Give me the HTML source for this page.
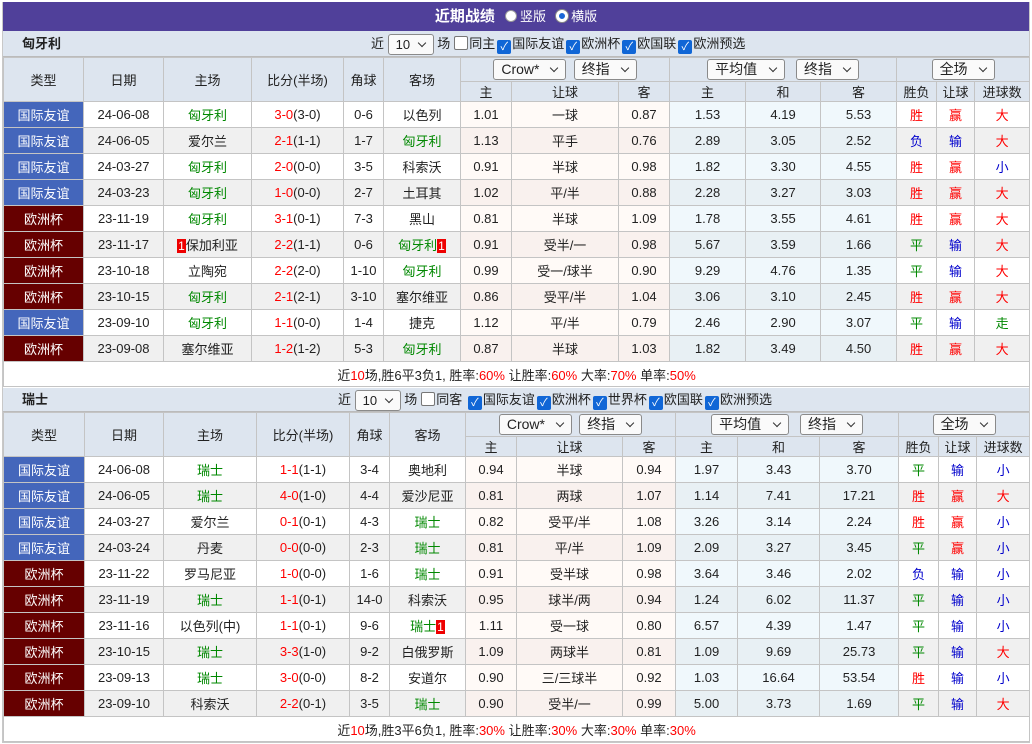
<!DOCTYPE html>
<html><head><meta charset="utf-8">
<style>
*{box-sizing:border-box}
body{margin:0;background:#fff;font-family:"Liberation Sans","Noto Sans CJK SC",sans-serif;font-size:13px;color:#222;width:1032px;height:744px;overflow:hidden}
.wrap{position:absolute;left:2px;top:2px;width:1028px;border:1px solid #c8c8c8;border-top:0}
.title{height:29px;background:#50409a;color:#fff;font-weight:bold;font-size:15px;text-align:center;line-height:29px}
.title .r{display:inline-block;width:12px;height:12px;border-radius:50%;background:#fff;border:1px solid #999;vertical-align:-1px;margin:0 3px 0 6px;font-weight:normal}
.title .r.on{border:3px solid #fff;background:#1a66d6;box-shadow:0 0 0 1px #888}
.title span.t{font-weight:normal;font-size:13px}
.team{height:26px;background:#dde5ef;position:relative;line-height:26px;border-bottom:1px solid #bbb}
.team b{position:absolute;left:19px;font-size:13px}
.team .f{position:absolute;top:0}
.sel{display:inline-block;border:1px solid #8a8a8a;border-radius:3px;background:#fafafa;height:21px;line-height:19px;padding:0 7px;vertical-align:middle;font-size:14px;text-align:left;position:relative;padding-right:26px}
.sel:after{content:"";position:absolute;right:8px;top:5px;width:5px;height:5px;border-right:1.5px solid #333;border-bottom:1.5px solid #333;transform:rotate(45deg)}
.cb{display:inline-block;width:14px;height:14px;border-radius:2px;background:#1066d6;color:#fff;font-size:11px;line-height:14px;text-align:center;vertical-align:-2px;margin:0 1px 0 2px}
.cb.off{background:#fff;border:1px solid #777;margin-left:4px}
table{border-collapse:collapse;width:100%;table-layout:fixed}
td,th{border:1px solid #c4c4c4;text-align:center;padding:0;font-weight:normal;white-space:nowrap;overflow:hidden}
th{background:#dde5ef}
tr.h1 th{height:24px}
tr.h2 th{height:18px}
tr.d td{height:26px}
tr.d:nth-child(even) td{background:#f0f0f0}
tr.d td.a{background:#fffaf7}
tr.d td.b{background:#f0f8fc}
tr.d:nth-child(even) td.a{background:#f9f1ee}
tr.d:nth-child(even) td.b{background:#e8f0f4}
td.i{background:#4466bb!important;color:#fff}
td.e{background:#660000!important;color:#fff}
.g{color:#008800}.rd{color:#f00}.bl{color:#00c}
.rc{background:#e00;color:#fff;font-size:12px;padding:0 1px}
td.sum{height:25px;background:#fff}
</style></head><body>
<div class="wrap">
<div class="title">近期战绩 <span class="r"></span><span class="t">竖版</span> <span class="r on"></span><span class="t">横版</span></div>

<div class="team"><b>匈牙利</b><div class="f" style="left:368px">近 <span class="sel" style="width:46px;font-size:13px">10</span> 场<span class="cb off"></span>同主<span class="cb">✓</span>国际友谊<span class="cb">✓</span>欧洲杯<span class="cb">✓</span>欧国联<span class="cb">✓</span>欧洲预选</div></div>
<table>
<colgroup><col style="width:80px"><col style="width:80px"><col style="width:88px"><col style="width:92px"><col style="width:40px"><col style="width:77px"><col style="width:51px"><col style="width:107px"><col style="width:51px"><col style="width:76px"><col style="width:75px"><col style="width:76px"><col style="width:40px"><col style="width:38px"><col style="width:55px"></colgroup>
<tr class="h1"><th rowspan="2">类型</th><th rowspan="2">日期</th><th rowspan="2">主场</th><th rowspan="2">比分(半场)</th><th rowspan="2">角球</th><th rowspan="2">客场</th><th colspan="3"><span class="sel">Crow*</span> &nbsp;<span class="sel">终指</span></th><th colspan="3"><span class="sel" style="width:78px">平均值</span> &nbsp; <span class="sel">终指</span></th><th colspan="3"><span class="sel">全场</span></th></tr>
<tr class="h2"><th>主</th><th>让球</th><th>客</th><th>主</th><th>和</th><th>客</th><th>胜负</th><th>让球</th><th>进球数</th></tr>
<tr class="d"><td class="i">国际友谊</td><td>24-06-08</td><td class="g">匈牙利</td><td><span class="rd">3-0</span>(3-0)</td><td>0-6</td><td>以色列</td><td class="a">1.01</td><td class="a">一球</td><td class="a">0.87</td><td class="b">1.53</td><td class="b">4.19</td><td class="b">5.53</td><td class="rd">胜</td><td class="rd">赢</td><td class="rd">大</td></tr>
<tr class="d"><td class="i">国际友谊</td><td>24-06-05</td><td>爱尔兰</td><td><span class="rd">2-1</span>(1-1)</td><td>1-7</td><td class="g">匈牙利</td><td class="a">1.13</td><td class="a">平手</td><td class="a">0.76</td><td class="b">2.89</td><td class="b">3.05</td><td class="b">2.52</td><td class="bl">负</td><td class="bl">输</td><td class="rd">大</td></tr>
<tr class="d"><td class="i">国际友谊</td><td>24-03-27</td><td class="g">匈牙利</td><td><span class="rd">2-0</span>(0-0)</td><td>3-5</td><td>科索沃</td><td class="a">0.91</td><td class="a">半球</td><td class="a">0.98</td><td class="b">1.82</td><td class="b">3.30</td><td class="b">4.55</td><td class="rd">胜</td><td class="rd">赢</td><td class="bl">小</td></tr>
<tr class="d"><td class="i">国际友谊</td><td>24-03-23</td><td class="g">匈牙利</td><td><span class="rd">1-0</span>(0-0)</td><td>2-7</td><td>土耳其</td><td class="a">1.02</td><td class="a">平/半</td><td class="a">0.88</td><td class="b">2.28</td><td class="b">3.27</td><td class="b">3.03</td><td class="rd">胜</td><td class="rd">赢</td><td class="rd">大</td></tr>
<tr class="d"><td class="e">欧洲杯</td><td>23-11-19</td><td class="g">匈牙利</td><td><span class="rd">3-1</span>(0-1)</td><td>7-3</td><td>黑山</td><td class="a">0.81</td><td class="a">半球</td><td class="a">1.09</td><td class="b">1.78</td><td class="b">3.55</td><td class="b">4.61</td><td class="rd">胜</td><td class="rd">赢</td><td class="rd">大</td></tr>
<tr class="d"><td class="e">欧洲杯</td><td>23-11-17</td><td><span class="rc">1</span>保加利亚</td><td><span class="rd">2-2</span>(1-1)</td><td>0-6</td><td class="g">匈牙利<span class="rc">1</span></td><td class="a">0.91</td><td class="a">受半/一</td><td class="a">0.98</td><td class="b">5.67</td><td class="b">3.59</td><td class="b">1.66</td><td class="g">平</td><td class="bl">输</td><td class="rd">大</td></tr>
<tr class="d"><td class="e">欧洲杯</td><td>23-10-18</td><td>立陶宛</td><td><span class="rd">2-2</span>(2-0)</td><td>1-10</td><td class="g">匈牙利</td><td class="a">0.99</td><td class="a">受一/球半</td><td class="a">0.90</td><td class="b">9.29</td><td class="b">4.76</td><td class="b">1.35</td><td class="g">平</td><td class="bl">输</td><td class="rd">大</td></tr>
<tr class="d"><td class="e">欧洲杯</td><td>23-10-15</td><td class="g">匈牙利</td><td><span class="rd">2-1</span>(2-1)</td><td>3-10</td><td>塞尔维亚</td><td class="a">0.86</td><td class="a">受平/半</td><td class="a">1.04</td><td class="b">3.06</td><td class="b">3.10</td><td class="b">2.45</td><td class="rd">胜</td><td class="rd">赢</td><td class="rd">大</td></tr>
<tr class="d"><td class="i">国际友谊</td><td>23-09-10</td><td class="g">匈牙利</td><td><span class="rd">1-1</span>(0-0)</td><td>1-4</td><td>捷克</td><td class="a">1.12</td><td class="a">平/半</td><td class="a">0.79</td><td class="b">2.46</td><td class="b">2.90</td><td class="b">3.07</td><td class="g">平</td><td class="bl">输</td><td class="g">走</td></tr>
<tr class="d"><td class="e">欧洲杯</td><td>23-09-08</td><td>塞尔维亚</td><td><span class="rd">1-2</span>(1-2)</td><td>5-3</td><td class="g">匈牙利</td><td class="a">0.87</td><td class="a">半球</td><td class="a">1.03</td><td class="b">1.82</td><td class="b">3.49</td><td class="b">4.50</td><td class="rd">胜</td><td class="rd">赢</td><td class="rd">大</td></tr>
<tr><td colspan="15" class="sum">近<span class="rd">10</span>场,胜6平3负1, 胜率:<span class="rd">60%</span> 让胜率:<span class="rd">60%</span> 大率:<span class="rd">70%</span> 单率:<span class="rd">50%</span></td></tr>
</table>

<div class="team" style="height:24px;line-height:24px;margin-top:1px"><b>瑞士</b><div class="f" style="left:335px">近 <span class="sel" style="width:46px;font-size:13px">10</span> 场<span class="cb off"></span>同客 <span class="cb">✓</span>国际友谊<span class="cb">✓</span>欧洲杯<span class="cb">✓</span>世界杯<span class="cb">✓</span>欧国联<span class="cb">✓</span>欧洲预选</div></div>
<table>
<colgroup><col style="width:81px"><col style="width:79px"><col style="width:93px"><col style="width:93px"><col style="width:40px"><col style="width:76px"><col style="width:51px"><col style="width:106px"><col style="width:53px"><col style="width:62px"><col style="width:82px"><col style="width:79px"><col style="width:40px"><col style="width:38px"><col style="width:53px"></colgroup>
<tr class="h1"><th rowspan="2">类型</th><th rowspan="2">日期</th><th rowspan="2">主场</th><th rowspan="2">比分(半场)</th><th rowspan="2">角球</th><th rowspan="2">客场</th><th colspan="3"><span class="sel">Crow*</span> &nbsp;<span class="sel">终指</span></th><th colspan="3"><span class="sel" style="width:78px">平均值</span> &nbsp; <span class="sel">终指</span></th><th colspan="3"><span class="sel">全场</span></th></tr>
<tr class="h2"><th>主</th><th>让球</th><th>客</th><th>主</th><th>和</th><th>客</th><th>胜负</th><th>让球</th><th>进球数</th></tr>
<tr class="d"><td class="i">国际友谊</td><td>24-06-08</td><td class="g">瑞士</td><td><span class="rd">1-1</span>(1-1)</td><td>3-4</td><td>奥地利</td><td class="a">0.94</td><td class="a">半球</td><td class="a">0.94</td><td class="b">1.97</td><td class="b">3.43</td><td class="b">3.70</td><td class="g">平</td><td class="bl">输</td><td class="bl">小</td></tr>
<tr class="d"><td class="i">国际友谊</td><td>24-06-05</td><td class="g">瑞士</td><td><span class="rd">4-0</span>(1-0)</td><td>4-4</td><td>爱沙尼亚</td><td class="a">0.81</td><td class="a">两球</td><td class="a">1.07</td><td class="b">1.14</td><td class="b">7.41</td><td class="b">17.21</td><td class="rd">胜</td><td class="rd">赢</td><td class="rd">大</td></tr>
<tr class="d"><td class="i">国际友谊</td><td>24-03-27</td><td>爱尔兰</td><td><span class="rd">0-1</span>(0-1)</td><td>4-3</td><td class="g">瑞士</td><td class="a">0.82</td><td class="a">受平/半</td><td class="a">1.08</td><td class="b">3.26</td><td class="b">3.14</td><td class="b">2.24</td><td class="rd">胜</td><td class="rd">赢</td><td class="bl">小</td></tr>
<tr class="d"><td class="i">国际友谊</td><td>24-03-24</td><td>丹麦</td><td><span class="rd">0-0</span>(0-0)</td><td>2-3</td><td class="g">瑞士</td><td class="a">0.81</td><td class="a">平/半</td><td class="a">1.09</td><td class="b">2.09</td><td class="b">3.27</td><td class="b">3.45</td><td class="g">平</td><td class="rd">赢</td><td class="bl">小</td></tr>
<tr class="d"><td class="e">欧洲杯</td><td>23-11-22</td><td>罗马尼亚</td><td><span class="rd">1-0</span>(0-0)</td><td>1-6</td><td class="g">瑞士</td><td class="a">0.91</td><td class="a">受半球</td><td class="a">0.98</td><td class="b">3.64</td><td class="b">3.46</td><td class="b">2.02</td><td class="bl">负</td><td class="bl">输</td><td class="bl">小</td></tr>
<tr class="d"><td class="e">欧洲杯</td><td>23-11-19</td><td class="g">瑞士</td><td><span class="rd">1-1</span>(0-1)</td><td>14-0</td><td>科索沃</td><td class="a">0.95</td><td class="a">球半/两</td><td class="a">0.94</td><td class="b">1.24</td><td class="b">6.02</td><td class="b">11.37</td><td class="g">平</td><td class="bl">输</td><td class="bl">小</td></tr>
<tr class="d"><td class="e">欧洲杯</td><td>23-11-16</td><td>以色列(中)</td><td><span class="rd">1-1</span>(0-1)</td><td>9-6</td><td class="g">瑞士<span class="rc">1</span></td><td class="a">1.11</td><td class="a">受一球</td><td class="a">0.80</td><td class="b">6.57</td><td class="b">4.39</td><td class="b">1.47</td><td class="g">平</td><td class="bl">输</td><td class="bl">小</td></tr>
<tr class="d"><td class="e">欧洲杯</td><td>23-10-15</td><td class="g">瑞士</td><td><span class="rd">3-3</span>(1-0)</td><td>9-2</td><td>白俄罗斯</td><td class="a">1.09</td><td class="a">两球半</td><td class="a">0.81</td><td class="b">1.09</td><td class="b">9.69</td><td class="b">25.73</td><td class="g">平</td><td class="bl">输</td><td class="rd">大</td></tr>
<tr class="d"><td class="e">欧洲杯</td><td>23-09-13</td><td class="g">瑞士</td><td><span class="rd">3-0</span>(0-0)</td><td>8-2</td><td>安道尔</td><td class="a">0.90</td><td class="a">三/三球半</td><td class="a">0.92</td><td class="b">1.03</td><td class="b">16.64</td><td class="b">53.54</td><td class="rd">胜</td><td class="bl">输</td><td class="bl">小</td></tr>
<tr class="d"><td class="e">欧洲杯</td><td>23-09-10</td><td>科索沃</td><td><span class="rd">2-2</span>(0-1)</td><td>3-5</td><td class="g">瑞士</td><td class="a">0.90</td><td class="a">受半/一</td><td class="a">0.99</td><td class="b">5.00</td><td class="b">3.73</td><td class="b">1.69</td><td class="g">平</td><td class="bl">输</td><td class="rd">大</td></tr>
<tr><td colspan="15" class="sum">近<span class="rd">10</span>场,胜3平6负1, 胜率:<span class="rd">30%</span> 让胜率:<span class="rd">30%</span> 大率:<span class="rd">30%</span> 单率:<span class="rd">30%</span></td></tr>
</table>
</div>
</body></html>
